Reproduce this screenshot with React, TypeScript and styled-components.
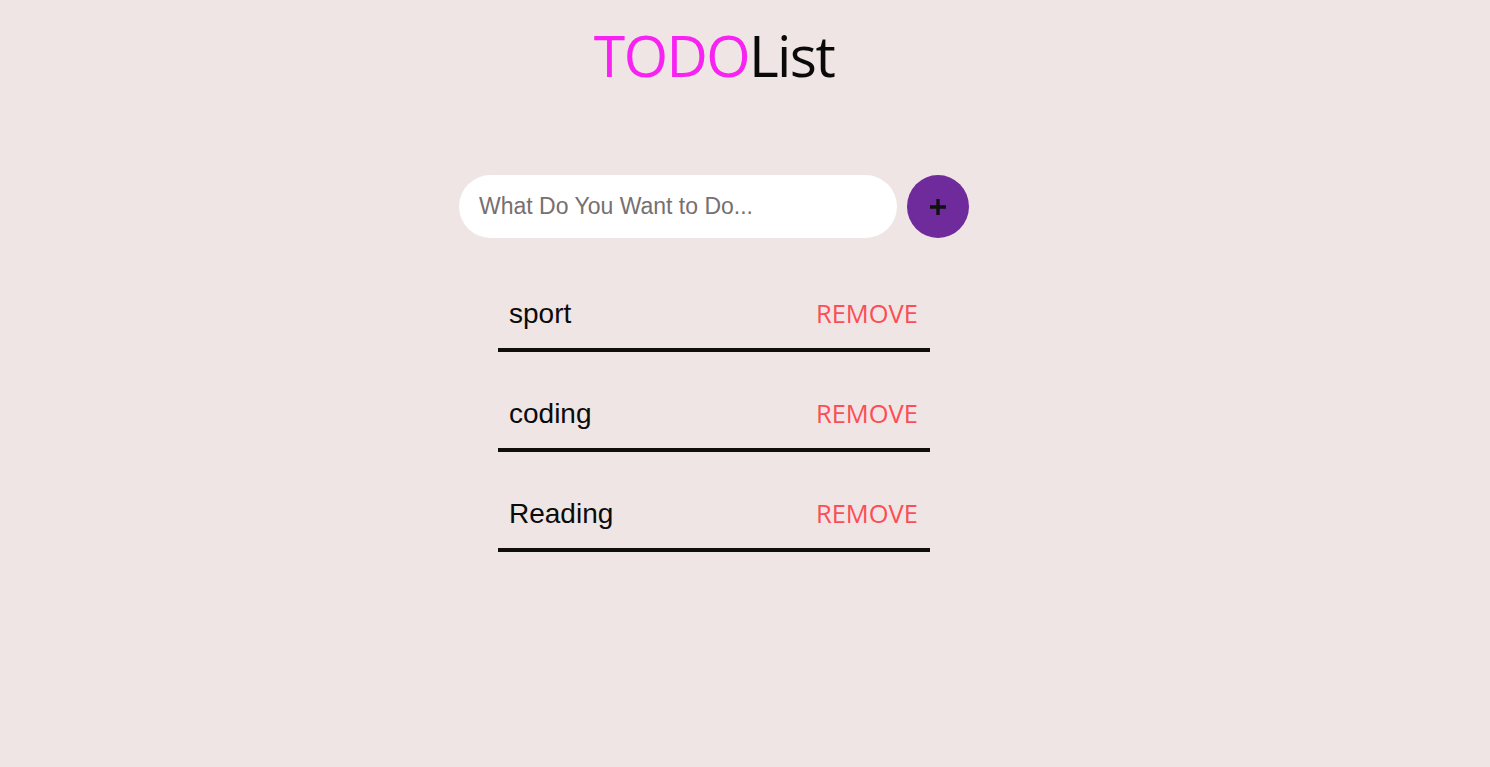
import React, { useState } from "react";
import styled, { createGlobalStyle } from "styled-components";

const GlobalStyle = createGlobalStyle`
  html, body {
    margin: 0;
    padding: 0;
    background: #efe5e4;
  }
  body {
    font-family: "Liberation Sans", Arial, sans-serif;
  }
`;

const Page = styled.main`
  box-sizing: border-box;
  min-height: 767px;
  padding-right: 62px;
  display: flex;
  flex-direction: column;
  align-items: center;
`;

const Title = styled.h1`
  margin: 20px 0 0;
  height: 70px;
  line-height: 70px;
  font-family: "Open Sans", "Noto Sans", sans-serif;
  font-weight: 400;
  font-size: 57px;
  letter-spacing: -1.6px;
  color: #0a0a0a;
`;

const Accent = styled.span`
  color: #f823f3;
`;

const Form = styled.form`
  margin-top: 85px;
  display: flex;
  align-items: center;
  gap: 10px;
`;

const Input = styled.input`
  box-sizing: border-box;
  width: 438px;
  height: 63px;
  border: none;
  outline: none;
  border-radius: 32px;
  background: #ffffff;
  padding: 0 20px;
  font-family: "Liberation Sans", Arial, sans-serif;
  font-size: 23px;
  color: #222;

  &::placeholder {
    color: #767070;
  }
`;

const AddButton = styled.button`
  width: 62px;
  height: 63px;
  border: none;
  border-radius: 50%;
  background: #6f2b9b;
  color: #111;
  display: flex;
  align-items: center;
  justify-content: center;
  padding: 0;
  cursor: pointer;
`;

const List = styled.ul`
  list-style: none;
  margin: 14px 0 0;
  padding: 0;
  width: 432px;
`;

const Item = styled.li`
  height: 32px;
  display: flex;
  justify-content: space-between;
  align-items: baseline;
  padding: 46px 12px 18px 11px;
  border-bottom: 4px solid #120d0d;
`;

const ItemText = styled.span`
  font-family: "Liberation Sans", Arial, sans-serif;
  font-size: 28px;
  line-height: 32px;
  color: #0b0b0b;
`;

const RemoveButton = styled.button`
  border: none;
  background: none;
  padding: 0;
  font-family: "Open Sans", "Noto Sans", sans-serif;
  font-size: 25.5px;
  line-height: 28px;
  color: #fd4d55;
  cursor: pointer;
`;

export default function App() {
  const [todos, setTodos] = useState<string[]>(["sport", "coding", "Reading"]);
  const [text, setText] = useState("");

  const add = (e: React.FormEvent) => {
    e.preventDefault();
    if (!text.trim()) return;
    setTodos([...todos, text.trim()]);
    setText("");
  };

  return (
    <>
      <GlobalStyle />
      <Page>
        <Title>
          <Accent>TODO</Accent>List
        </Title>
        <Form onSubmit={add}>
          <Input
            placeholder="What Do You Want to Do..."
            value={text}
            onChange={(e) => setText(e.target.value)}
          />
          <AddButton type="submit" aria-label="add">
            <svg width="20" height="20" viewBox="0 0 20 20">
              <path d="M10 2v16M2 10h16" stroke="#111" strokeWidth="3.4" />
            </svg>
          </AddButton>
        </Form>
        <List>
          {todos.map((t, i) => (
            <Item key={i}>
              <ItemText>{t}</ItemText>
              <RemoveButton onClick={() => setTodos(todos.filter((_, j) => j !== i))}>
                REMOVE
              </RemoveButton>
            </Item>
          ))}
        </List>
      </Page>
    </>
  );
}
